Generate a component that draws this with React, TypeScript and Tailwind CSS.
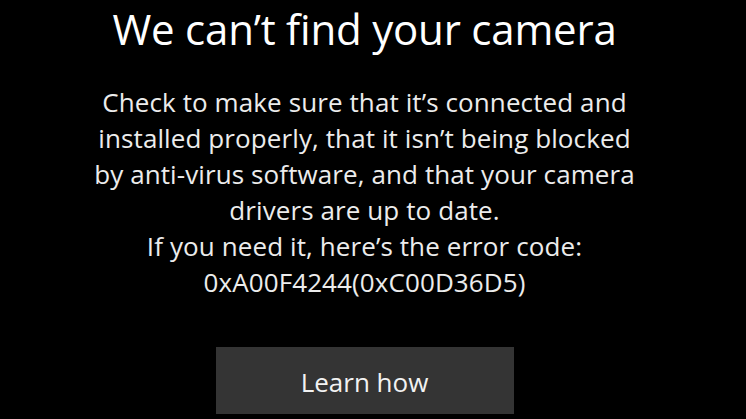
import React from "react";

export default function App() {
  return (
    <div className="flex h-[419px] w-[746px] flex-col items-center overflow-hidden bg-black pr-[17px] pt-px text-white [font-family:'Open_Sans',sans-serif]">
      <h1 className="text-[42px] leading-[56px] tracking-[-0.2px]">
        We can’t find your camera
      </h1>
      <div className="mt-[27px] flex flex-col items-center text-center text-[26px] leading-[36px] tracking-[0.1px] text-[#ececec]">
        <p>Check to make sure that it’s connected and</p>
        <p>installed properly, that it isn’t being blocked</p>
        <p>by anti-virus software, and that your camera</p>
        <p>drivers are up to date.</p>
        <p>If you need it, here’s the error code:</p>
        <p>0xA00F4244(0xC00D36D5)</p>
      </div>
      <button className="mt-[47px] flex h-[67px] w-[298px] shrink-0 items-center justify-center bg-[#343434] pt-[4px] text-[26px] text-[#f2f2f2]">
        Learn how
      </button>
    </div>
  );
}
